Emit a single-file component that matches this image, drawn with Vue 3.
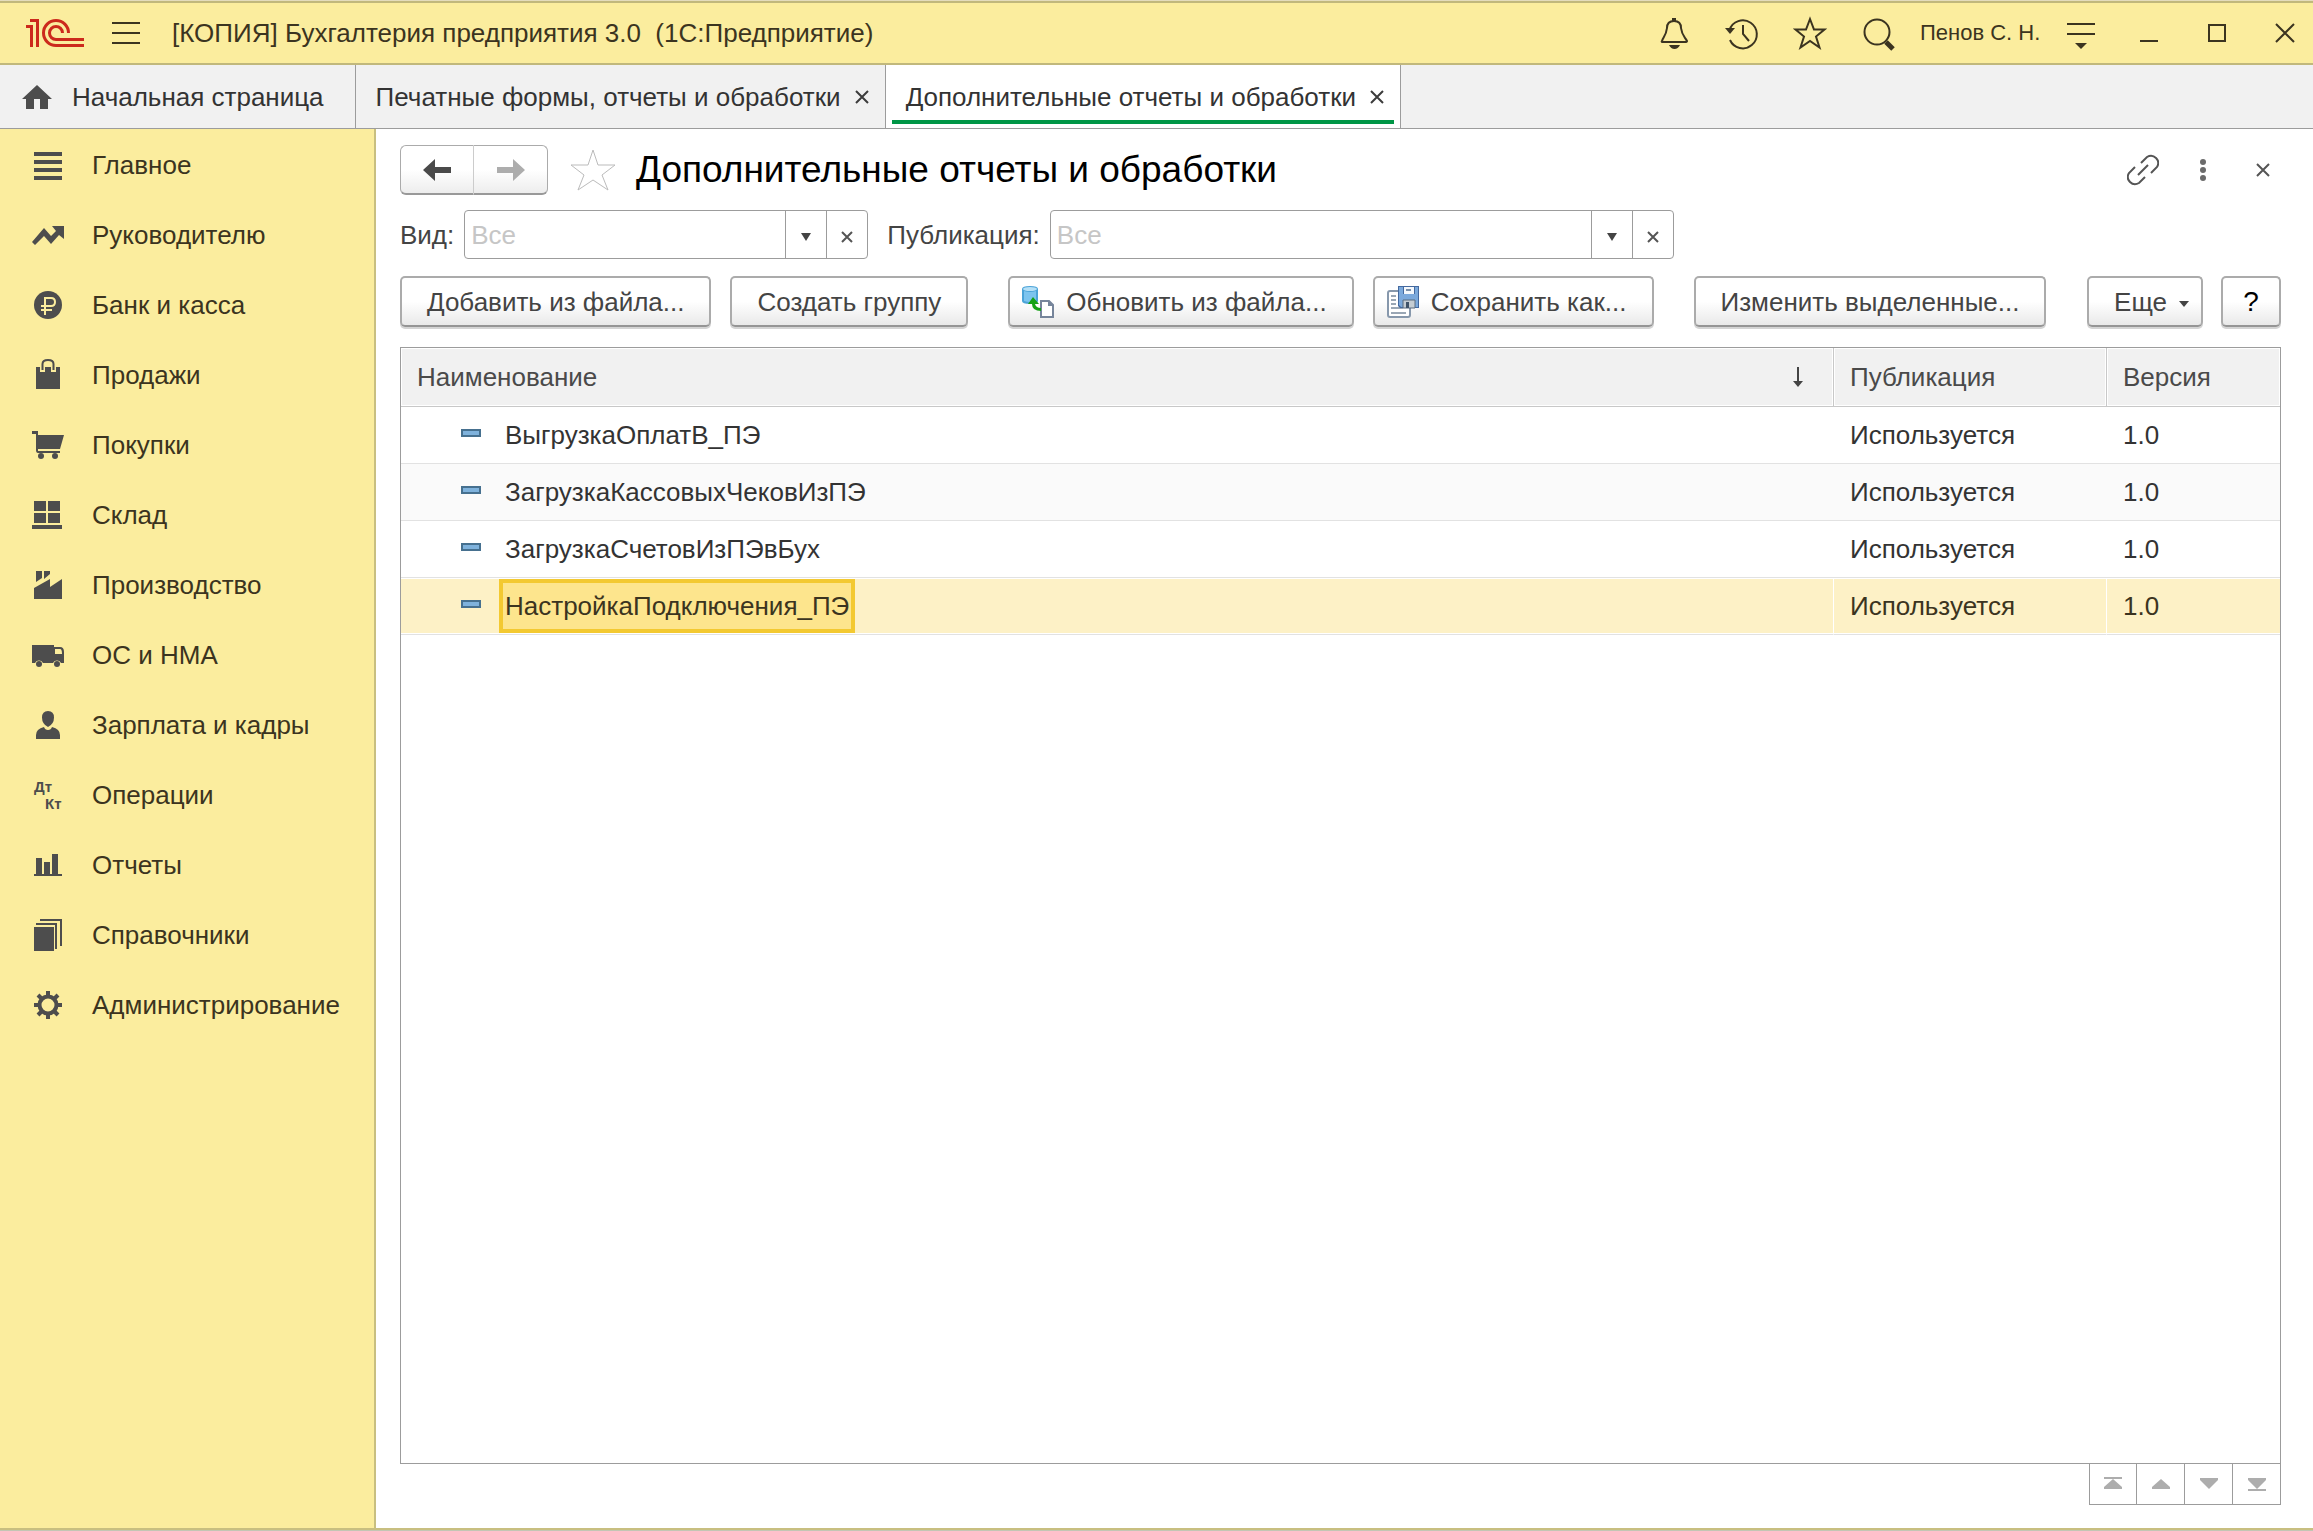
<script setup>
import { ref } from 'vue'

const kind = ref('')
const publication = ref('')

const tools = [
  { label: 'Уведомления', icon: '<g fill="none" stroke="#3b3420" stroke-width="2" stroke-linejoin="round"><path d="M5 26C6 22 9 21 10 13C10 8 13 6 17 6C21 6 24 8 24 13C25 21 28 22 30 26Q30 27 28 27H6Q4 27 5 26Z"/></g><path d="M15 3h4v3h-4zM12 30h11q-2 4-5.500 4t-5.500-4z" fill="#3b3420"/>' },
  { label: 'История', icon: '<g fill="none" stroke="#3b3420" stroke-width="2"><path d="M4.500 15A14 14 0 1 1 5 25"/><path d="M18 10v9l6 7"/></g><path d="M0 13h10l-5 6z" fill="#3b3420"/>' },
  { label: 'Избранное', icon: '<path d="M17 4l4 10.500h10.500l-8.500 7 3.500 11-9.500-6.500-9.500 6.500 3.500-11-8.500-7h10.500z" fill="none" stroke="#3b3420" stroke-width="2"/>' },
  { label: 'Поиск', icon: '<circle cx="16" cy="17" r="12.500" fill="none" stroke="#3b3420" stroke-width="2"/><path d="M25 27l7 7" stroke="#3b3420" stroke-width="5"/>' }
]

const tabs = [
  { title: 'Печатные формы, отчеты и обработки', active: false },
  { title: 'Дополнительные отчеты и обработки', active: true }
]

const sections = [
  { title: 'Главное', icon: '<path d="M2 3h28v4H2zM2 11h28v4H2zM2 19h28v4H2zM2 27h28v4H2z"/>' },
  { title: 'Руководителю', icon: '<path d="M0 23L12 9l7 8 5-5-4-5h12v13l-5-4-8 9-7-8-9 9z"/>' },
  { title: 'Банк и касса', icon: '<circle cx="16" cy="16" r="14"/><path d="M13 26V9h6q4 0 4 4t-4 4H9M9 21h11" fill="none" stroke="#fbed9e" stroke-width="2"/>' },
  { title: 'Продажи', icon: '<path d="M4 8h4v5h5V8h6v5h5V8h4v22H4z"/><path d="M10.500 11V5q0-4 5.500-4t5.500 4v6" fill="none" stroke="#4d4d4d" stroke-width="2"/>' },
  { title: 'Покупки', icon: '<path d="M0 2h6v4h26l-4 14H6v2h22v2H6q-2 0-2-3V5H0z"/><circle cx="9" cy="27" r="3"/><circle cx="23" cy="27" r="3"/>' },
  { title: 'Склад', icon: '<path d="M2 2h12v10H2zM16 2h12v10H16zM2 14h12v10H2zM16 14h12v10H16zM0 26h30v4H0z"/>' },
  { title: 'Производство', icon: '<path d="M4 2h6v7l-6 4zM12 2h6v3l-6 5zM2 19l16-9v8l12-8v20H2z"/>' },
  { title: 'ОС и НМА', icon: '<path d="M0 6h22v2h6q4 0 4 5v11h-3a4.500 4.500 0 0 0-8 0H11a4.500 4.500 0 0 0-8 0H0z"/><path d="M23 10h5q2 0 2 5h-7z" fill="#fbed9e"/><circle cx="7" cy="25" r="3"/><circle cx="25" cy="25" r="3"/>' },
  { title: 'Зарплата и кадры', icon: '<path d="M16 2q6 0 6 6.500T16 18q-6-3-6-9.500T16 2z"/><path d="M4 30v-4q0-6 8-8 1 3 4 3t4-3q8 2 8 8v4z"/>' },
  { title: 'Операции', icon: '<text x="2" y="13" font-size="15" font-weight="700">Дт</text><text x="13" y="30" font-size="15" font-weight="700">Кт</text>' },
  { title: 'Отчеты', icon: '<path d="M4 9h6v16h2V13h6v12h2V5h6v20h4v2H2v-2h2z"/>' },
  { title: 'Справочники', icon: '<path d="M2 8h20v24H2z"/><path d="M4 5h20v25M8 1h21v26" fill="none" stroke="#4d4d4d" stroke-width="2"/>' },
  { title: 'Администрирование', icon: '<circle cx="16" cy="16" r="8.500" fill="none" stroke="#4d4d4d" stroke-width="4"/><path d="M16 2v5M16 25v5M2 16h5M25 16h5M6 6l4 4M22 22l4 4M26 6l-4 4M10 22l-4 4" stroke="#4d4d4d" stroke-width="4"/>' }
]

const rows = ref([
  { name: 'ВыгрузкаОплатВ_ПЭ', publication: 'Используется', version: '1.0' },
  { name: 'ЗагрузкаКассовыхЧековИзПЭ', publication: 'Используется', version: '1.0' },
  { name: 'ЗагрузкаСчетовИзПЭвБух', publication: 'Используется', version: '1.0' },
  { name: 'НастройкаПодключения_ПЭ', publication: 'Используется', version: '1.0' }
])
const selected = ref(3)

const pager = [
  { label: 'В начало', path: 'M5 5h18v2H5zM14 7l9 8v2H5v-2z' },
  { label: 'Назад', path: 'M14 7l9 8v2H5v-2z' },
  { label: 'Вперед', path: 'M5 6h18v2l-9 9-9-9z' },
  { label: 'В конец', path: 'M5 6h18v2l-9 9-9-9zM5 17h18v2H5z' }
]
</script>

<template>
  <div class="window">
    <header class="titlebar">
      <svg class="logo" width="58" height="28" viewBox="0 0 58 28" role="img" aria-label="1С">
        <path d="M4 0H13V28H10V3H4zM0 6H7V28H4V9H0z" fill="#cc2a1c" />
        <path d="M42.500 14A12.500 12.500 0 1 0 30 26.500H58M36.500 14A6.500 6.500 0 1 0 30 20.500H58" fill="none" stroke="#cc2a1c" stroke-width="3" />
      </svg>
      <button class="plain menu" aria-label="Меню">
        <svg width="28" height="22" viewBox="0 0 28 22"><path d="M0 1h28M0 11h28M0 21h28" stroke="#3b3420" stroke-width="2" /></svg>
      </button>
      <span class="app-title">[КОПИЯ] Бухгалтерия предприятия 3.0&nbsp; (1С:Предприятие)</span>
      <button v-for="t in tools" :key="t.label" class="plain slot" :aria-label="t.label">
        <svg width="34" height="36" viewBox="0 0 34 36" v-html="t.icon"></svg>
      </button>
      <a href="#" class="user">Пенов С. Н.</a>
      <button class="plain slot" aria-label="Настройки">
        <svg width="28" height="34" viewBox="0 0 28 34"><path d="M0 8h28M0 18h28" stroke="#3b3420" stroke-width="2" /><path d="M8 27h12l-6 6z" fill="#3b3420" /></svg>
      </button>
      <button class="plain slot" aria-label="Свернуть">
        <svg width="20" height="20" viewBox="0 0 20 20"><path d="M1 18h18" stroke="#3b3420" stroke-width="2" /></svg>
      </button>
      <button class="plain slot" aria-label="Развернуть">
        <svg width="20" height="20" viewBox="0 0 20 20"><path d="M2 2h16v16H2z" fill="none" stroke="#3b3420" stroke-width="2" /></svg>
      </button>
      <button class="plain slot edge" aria-label="Закрыть">
        <svg width="20" height="20" viewBox="0 0 20 20"><path d="M1 1l18 18M19 1L1 19" stroke="#3b3420" stroke-width="2" /></svg>
      </button>
    </header>

    <nav class="tabs">
      <a href="#" class="tab home">
        <svg width="30" height="24" viewBox="0 0 30 24"><path d="M15 0l15 14h-4v10h-8V14h-6v10H4V14H0z" fill="#4d4d4d" /></svg>
        <span>Начальная страница</span>
      </a>
      <div v-for="t in tabs" :key="t.title" class="tab" :class="{ active: t.active }">
        <a href="#">{{ t.title }}</a>
        <button class="plain" aria-label="Закрыть вкладку">
          <svg width="14" height="14" viewBox="0 0 14 14"><path d="M1 1l12 12M13 1L1 13" stroke="#3c3c3c" stroke-width="2" /></svg>
        </button>
      </div>
    </nav>

    <div class="body">
      <nav class="sidebar">
        <a v-for="s in sections" :key="s.title" href="#">
          <svg width="32" height="32" viewBox="0 0 32 32" fill="#4d4d4d" v-html="s.icon"></svg>
          <span>{{ s.title }}</span>
        </a>
      </nav>

      <main class="content">
        <div class="heading">
          <div class="history">
            <button aria-label="Назад"><svg width="28" height="22" viewBox="0 0 28 22"><path d="M0 11L12 0v8h16v6H12v8z" fill="#4a4a4a" /></svg></button>
            <button aria-label="Вперед" disabled><svg width="28" height="22" viewBox="0 0 28 22"><path d="M28 11L16 0v8H0v6h16v8z" fill="#adadad" /></svg></button>
          </div>
          <button class="plain" aria-label="В избранное">
            <svg width="46" height="44" viewBox="0 0 46 44"><path d="M23 2l5 15h17l-13 10 6 15-15-10-15 10 6-15L1 17h17z" fill="#fff" stroke="#bbb" /></svg>
          </button>
          <h1>Дополнительные отчеты и обработки</h1>
          <button class="plain action" aria-label="Ссылка">
            <svg width="32" height="32" viewBox="0 0 32 32" fill="none" stroke="#555" stroke-width="2"><path d="M14 9l6-6q5-3 9 1t1 9l-6 6M18 23l-6 6q-5 3-9-1t-1-9l6-6M11 21l10-10" /></svg>
          </button>
          <button class="plain action" aria-label="Еще">
            <svg width="8" height="24" viewBox="0 0 8 24" fill="#6b6b6b"><circle cx="4" cy="4" r="3" /><circle cx="4" cy="12" r="3" /><circle cx="4" cy="20" r="3" /></svg>
          </button>
          <button class="plain action close" aria-label="Закрыть форму">
            <svg width="14" height="14" viewBox="0 0 14 14"><path d="M1 1l12 12M13 1L1 13" stroke="#555" stroke-width="2" /></svg>
          </button>
        </div>

        <div class="filters">
          <label for="kind">Вид:</label>
          <div class="combo kind">
            <input id="kind" v-model="kind" type="text" placeholder="Все">
            <button aria-label="Выбрать вид"><svg width="10" height="8" viewBox="0 0 10 8"><path d="M0 0h10L5 8z" fill="#444" /></svg></button>
            <button aria-label="Очистить вид"><svg width="12" height="12" viewBox="0 0 12 12"><path d="M1 1l10 10M11 1L1 11" stroke="#555" stroke-width="2" /></svg></button>
          </div>
          <label for="publication">Публикация:</label>
          <div class="combo publication">
            <input id="publication" v-model="publication" type="text" placeholder="Все">
            <button aria-label="Выбрать публикацию"><svg width="10" height="8" viewBox="0 0 10 8"><path d="M0 0h10L5 8z" fill="#444" /></svg></button>
            <button aria-label="Очистить публикацию"><svg width="12" height="12" viewBox="0 0 12 12"><path d="M1 1l10 10M11 1L1 11" stroke="#555" stroke-width="2" /></svg></button>
          </div>
        </div>

        <div class="commands">
          <div class="group">
            <button class="btn">Добавить из файла...</button>
            <button class="btn">Создать группу</button>
          </div>
          <div class="group">
            <button class="btn with-icon">
              <svg width="32" height="32" viewBox="0 0 32 32">
                <path d="M0 3q0-3 8-3t8 3v12q0 3-8 3t-8-3z" fill="#4ba3d8" />
                <path d="M2 5q6 2 12 0v10q-6 2-12 0z" fill="#7cc4ef" />
                <ellipse cx="8" cy="3" rx="7" ry="2" fill="#b5e0f7" />
                <path d="M19 15h8l4 4v12H19z" fill="#fff" stroke="#76859b" stroke-width="2" />
                <path d="M26 14v6h6z" fill="#76859b" />
                <path d="M11 11l6 7h-4q1 4 6 4v3q-9 0-9-7H6z" fill="#16a116" />
              </svg>
              Обновить из файла...
            </button>
            <button class="btn with-icon">
              <svg width="32" height="32" viewBox="0 0 32 32">
                <rect x="1" y="5" width="22" height="26" rx="2" fill="#fff" stroke="#8798ac" stroke-width="2" />
                <path d="M4 10h5M4 14h5M4 18h5M4 22h12M4 27h15" stroke="#9aa7b5" stroke-width="2" />
                <path d="M11 0h21v22H13l-2-2z" fill="#44699f" />
                <path d="M12 1h4v10h12V1h3v20H14l-2-2z" fill="#7ba9dc" />
                <path d="M16 8h12v6H16z" fill="#7ba9dc" />
                <path d="M17 1h10v7H17z" fill="#f4f8fc" />
                <path d="M19 4h5" stroke="#7b90aa" stroke-width="2" />
                <path d="M16 14h12v8H16z" fill="#c5cdd3" stroke="#5b6d80" />
                <path d="M19 16h3v6h-3z" fill="#3f5368" />
              </svg>
              Сохранить как...
            </button>
          </div>
          <button class="btn">Изменить выделенные...</button>
          <div class="group end">
            <button class="btn more">Еще <svg width="10" height="10" viewBox="0 0 10 10"><path d="M0 4h10l-5 6z" fill="#444" /></svg></button>
            <button class="btn help">?</button>
          </div>
        </div>

        <div class="list">
          <table>
            <thead>
              <tr>
                <th class="name">
                  <div class="sort">Наименование
                    <svg width="10" height="20" viewBox="0 0 10 20"><path d="M4 0h2v14h4l-5 6-5-6h4z" fill="#444" /></svg>
                  </div>
                </th>
                <th class="pub">Публикация</th>
                <th class="ver">Версия</th>
              </tr>
            </thead>
            <tbody>
              <tr v-for="(r, i) in rows" :key="r.name" :class="{ selected: i === selected }" @click="selected = i">
                <td>
                  <div class="item">
                    <svg width="20" height="8" viewBox="0 0 20 8"><path d="M1 1h18v6H1z" fill="#7fb2dc" stroke="#46708f" stroke-width="2" /></svg>
                    <span>{{ r.name }}</span>
                  </div>
                </td>
                <td>{{ r.publication }}</td>
                <td>{{ r.version }}</td>
              </tr>
            </tbody>
          </table>
        </div>
        <div class="pager">
          <button v-for="p in pager" :key="p.label" :aria-label="p.label" disabled>
            <svg width="28" height="24" viewBox="0 0 28 24"><path :d="p.path" fill="#adadad" /></svg>
          </button>
        </div>
      </main>
    </div>
    <div class="backdrop"></div>
  </div>
</template>

<style>
body {
  background: #fff;
}
</style>

<style scoped>
.window,
.window * {
  box-sizing: border-box;
}
.window {
  display: flex;
  flex-direction: column;
  min-height: 100vh;
  border-top: 1px solid #e4dcbc;
  font: 26px/32px "Liberation Sans", Arial, sans-serif;
  color: #333;
}
svg {
  display: block;
  flex: none;
}
a {
  color: inherit;
  text-decoration: none;
}
button,
input {
  font: inherit;
  color: inherit;
  margin: 0;
}
.plain {
  display: flex;
  align-items: center;
  justify-content: center;
  padding: 0;
  border: 0;
  background: none;
}

.titlebar {
  display: flex;
  align-items: center;
  height: 64px;
  padding-left: 26px;
  background: #fbed9e;
  border-top: 2px solid #c1b87c;
  border-bottom: 2px solid #c1b87c;
  color: #3b3420;
}
.menu {
  margin: 0 32px 0 28px;
}
.app-title {
  flex: 1;
  white-space: nowrap;
}
.slot {
  width: 68px;
  height: 60px;
}
.edge {
  width: 62px;
  padding-left: 6px;
}
.user {
  width: 135px;
  padding-left: 8px;
  font-size: 22px;
  white-space: nowrap;
}

.tabs {
  display: flex;
  height: 64px;
  background: #f1f1f1;
  border-bottom: 1px solid #9c9c9c;
}
.tab {
  display: flex;
  align-items: center;
  gap: 14px;
  padding: 0 16px 0 20px;
  border-right: 1px solid #9c9c9c;
  white-space: nowrap;
}
.home {
  gap: 20px;
  padding: 0 31px 0 22px;
}
.active {
  padding-left: 14px;
  border-left: 6px solid #fff;
  background: linear-gradient(#009646, #009646) 0 calc(100% - 4px) / calc(100% - 6px) 4px no-repeat #fff;
}

.body {
  display: flex;
  flex: 1;
}
.sidebar {
  width: 376px;
  padding-top: 1px;
  background: #fbed9e;
  border-right: 2px solid #c8bf80;
  color: #3b3420;
}
.sidebar a {
  display: flex;
  align-items: center;
  gap: 28px;
  height: 70px;
  padding-left: 32px;
}
.content {
  display: flex;
  flex: 1;
  flex-direction: column;
  padding: 16px 32px 23px 24px;
  min-width: 0;
}

.heading {
  display: flex;
  align-items: center;
  height: 50px;
}
.history {
  display: flex;
  height: 50px;
  margin-right: 22px;
}
.history button {
  display: flex;
  align-items: center;
  justify-content: center;
  width: 74px;
  padding: 0;
  border: 1px solid #ababab;
  border-bottom: 2px solid #999;
  border-radius: 0 6px 6px 0;
  background: linear-gradient(#fff 50%, #ededed);
}
.history button:first-child {
  border-right-color: #ccc;
  border-radius: 6px 0 0 6px;
}
.history button + button {
  border-left: 0;
}
h1 {
  flex: 1;
  margin: 0 0 0 20px;
  font-size: 37px;
  line-height: 48px;
  font-weight: 400;
  color: #000;
}
.action {
  width: 60px;
  height: 48px;
}
.close {
  margin-right: -12px;
}

.filters {
  display: flex;
  align-items: center;
  margin-top: 15px;
  color: #444;
}
.filters label {
  white-space: nowrap;
}
.combo {
  display: flex;
  height: 49px;
  margin: 0 19px 0 10px;
  border: 1px solid #9c9c9c;
  border-radius: 4px;
  background: #fff;
}
.combo.kind {
  width: 404px;
}
.combo.publication {
  width: 624px;
}
.combo input {
  flex: 1;
  min-width: 0;
  padding: 0 6px;
  border: 0;
  background: none;
  outline: none;
}
.combo input::placeholder {
  color: #c6c6c6;
  opacity: 1;
}
.combo button {
  display: flex;
  align-items: center;
  justify-content: center;
  width: 41px;
  padding: 4px 0 0;
  border: 0;
  border-left: 1px solid #9c9c9c;
  background: none;
}

.commands {
  display: flex;
  gap: 40px;
  margin-top: 17px;
}
.group {
  display: flex;
  gap: 19px;
}
.end {
  gap: 18px;
  margin-left: auto;
}
.btn {
  display: flex;
  align-items: center;
  justify-content: center;
  height: 51px;
  padding: 0 25px;
  border: 2px solid #ababab;
  border-bottom-color: #959595;
  border-radius: 5px;
  background: linear-gradient(#fff 50%, #e9e9e9);
  box-shadow: 0 2px 0 #d4d4d4;
  color: #444;
  white-space: nowrap;
}
.with-icon {
  gap: 12px;
  padding-left: 12px;
}
.more {
  gap: 12px;
  padding-right: 12px;
}
.help {
  width: 60px;
  padding: 0;
  color: #000;
  font-size: 28px;
}

.list {
  flex: 1;
  margin-top: 20px;
  border: 1px solid #9c9c9c;
}
table {
  width: 100%;
  border-collapse: separate;
  border-spacing: 0;
  table-layout: fixed;
}
th {
  height: 59px;
  padding: 0 16px;
  border: solid #c8c8c8;
  border-width: 0 1px 1px 0;
  background: #f1f1f1;
  box-shadow: inset 0 0 0 1px #fff;
  color: #4a4a4a;
  font-weight: 400;
  text-align: left;
}
th:last-child {
  border-right: 0;
}
th.pub {
  width: 273px;
}
th.ver {
  width: 173px;
}
.sort {
  display: flex;
  align-items: center;
  justify-content: space-between;
  padding-right: 14px;
}
td {
  height: 57px;
  padding: 0 16px;
  border-bottom: 1px solid #e2e2e2;
}
tbody tr:nth-child(even) td {
  background: #fafafa;
}
tbody tr.selected td {
  border-right: 1px solid #fff;
  background: #fdf1c6;
  box-shadow: inset 0 1px 0 #fff, inset 0 -1px 0 #fff;
  color: #3b3420;
}
tbody tr.selected td:last-child {
  border-right: 0;
}
.item {
  display: flex;
  align-items: center;
  gap: 18px;
  padding-left: 44px;
}
.item svg {
  margin-bottom: 4px;
}
.item span {
  height: 54px;
  padding: 0 2px;
  border: 4px solid transparent;
  line-height: 46px;
}
.selected .item span {
  border-color: #f3c931;
  background: #fde58d;
}

.pager {
  display: flex;
  justify-content: flex-end;
}
.pager button {
  display: flex;
  align-items: center;
  justify-content: center;
  width: 48px;
  height: 41px;
  padding: 0;
  border: 1px solid #9c9c9c;
  border-top: 0;
  border-left-width: 0;
  background: #fff;
}
.pager button:first-child {
  border-left-width: 1px;
}
.backdrop {
  height: 3px;
  border-top: 2px solid #c8bf80;
  background: #c3c6b4;
}
</style>
